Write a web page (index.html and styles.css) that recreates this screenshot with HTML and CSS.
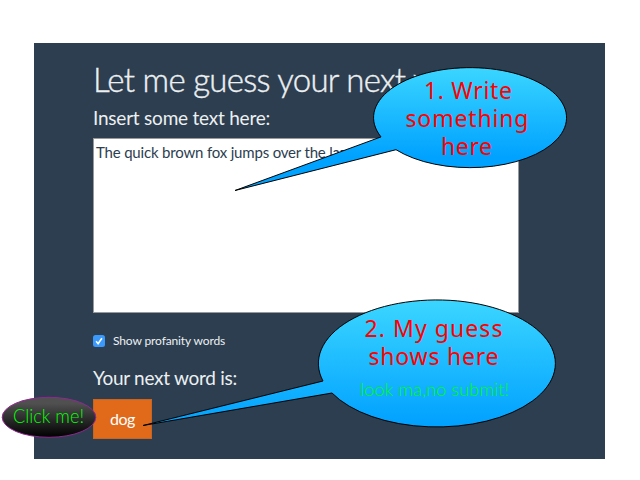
FILE: index.html
```html
<!DOCTYPE html>
<html lang="en">
<head>
<meta charset="utf-8">
<title>Next word</title>
<link rel="stylesheet" href="styles.css">
</head>
<body>
<main class="panel">
  <h1 class="title">Let me guess your next w</h1>
  <label class="prompt" for="source">Insert some text here:</label>
  <div class="editor" id="source">The quick brown fox jumps over the lazy</div>
  <div class="option">
    <svg class="check" viewBox="0 0 12 12"><rect width="12" height="12" rx="2.5" fill="#3b99fc"/><path d="M3.1 6.3 5.1 8.7 8.9 3.2" fill="none" stroke="#fff" stroke-width="1.6"/></svg>
    <span class="option-text">Show profanity words</span>
  </div>
  <p class="result">Your next word is:</p>
  <div class="word">dog</div>
</main>
<svg class="notes" viewBox="0 0 640 480">
  <defs>
    <linearGradient id="sky1" gradientUnits="userSpaceOnUse" x1="0" y1="67" x2="0" y2="167"><stop offset="0" stop-color="#3bd6ff"/><stop offset=".9" stop-color="#00a2ff"/></linearGradient>
    <linearGradient id="sky2" gradientUnits="userSpaceOnUse" x1="0" y1="300" x2="0" y2="427"><stop offset="0" stop-color="#3bd6ff"/><stop offset="1" stop-color="#00a0ff"/></linearGradient>
    <linearGradient id="dark" x1="0" y1="0" x2="0" y2="1"><stop offset=".15" stop-color="#505050"/><stop offset="1" stop-color="#000"/></linearGradient>
  </defs>
  <path class="bubble" fill="url(#sky1)" d="M381 136.900A96.500 50 0 1 1 396 149.700L235 190.500Z"/>
  <g class="hint">
    <text x="424" y="99" textLength="88">1. Write</text>
    <text x="405.500" y="127" textLength="123">something</text>
    <text x="441" y="155" textLength="51">here</text>
  </g>
  <path class="bubble" fill="url(#sky2)" d="M323 381A118.500 63.500 0 1 1 332 393L143 425.500Z"/>
  <g class="hint">
    <text x="364.500" y="337" textLength="138">2. My guess</text>
    <text x="368.500" y="365" textLength="130">shows here</text>
  </g>
  <text class="script aside" x="360" y="396" textLength="149" lengthAdjust="spacingAndGlyphs">look ma,no submit!</text>
  <ellipse cx="49" cy="417.300" rx="46.800" ry="20" fill="url(#dark)" stroke="#91278f"/>
  <text class="script" x="13" y="423" textLength="71" lengthAdjust="spacingAndGlyphs">Click me!</text>
</svg>
</body>
</html>
```
FILE: styles.css
```css
* { box-sizing: border-box; }
body {
  margin: 0;
  width: 640px;
  height: 480px;
  padding: 43px 35px 21px 34px;
  background: #fff;
  overflow: hidden;
  position: relative;
  font-family: Lato, sans-serif;
}
.panel {
  height: 416px;
  padding: 15px 86px 20px 59px;
  background: #2c3e50;
  color: #ecf0f1;
  display: flex;
  flex-direction: column;
  align-items: flex-start;
}
.title {
  margin: 0;
  height: 44px;
  font-size: 33px;
  line-height: 42px;
  font-weight: 300;
  letter-spacing: -0.72px;
  -webkit-text-stroke: 0.4px #ecf0f1;
  white-space: nowrap;
}
.prompt {
  height: 36px;
  font-size: 19px;
  line-height: 32px;
  letter-spacing: -0.22px;
}
.editor {
  width: 426px;
  height: 175px;
  padding: 4px 2px;
  border: 1px solid #999;
  background: #fff;
  color: #2c3e50;
  font-size: 15px;
  line-height: 18px;
  letter-spacing: -0.18px;
}
.option {
  display: flex;
  align-items: center;
  gap: 8px;
  height: 20px;
  margin-top: 18px;
}
.check { width: 12px; height: 12px; }
.option-text {
  font-size: 12px;
  letter-spacing: -0.12px;
  position: relative;
  top: -1px;
}
.result {
  margin: 14px 0 8px;
  font-size: 19px;
  line-height: 26px;
  letter-spacing: -0.28px;
}
.word {
  width: 59px;
  height: 40px;
  border: 1px solid #c9651f;
  background: #e06a1a;
  color: #fff;
  font-size: 16px;
  line-height: 38px;
  letter-spacing: -0.5px;
  text-align: center;
}
.notes {
  position: absolute;
  left: 0;
  top: 0;
  width: 640px;
  height: 480px;
}
.bubble { stroke: #000; stroke-width: 1; stroke-linejoin: miter; }
.hint { font-family: "Noto Sans", sans-serif; font-size: 23px; fill: #f00; }
.script { font-family: Lato, sans-serif; font-weight: 300; font-size: 19px; fill: #0f0; }
.aside { font-size: 18px; }
```
